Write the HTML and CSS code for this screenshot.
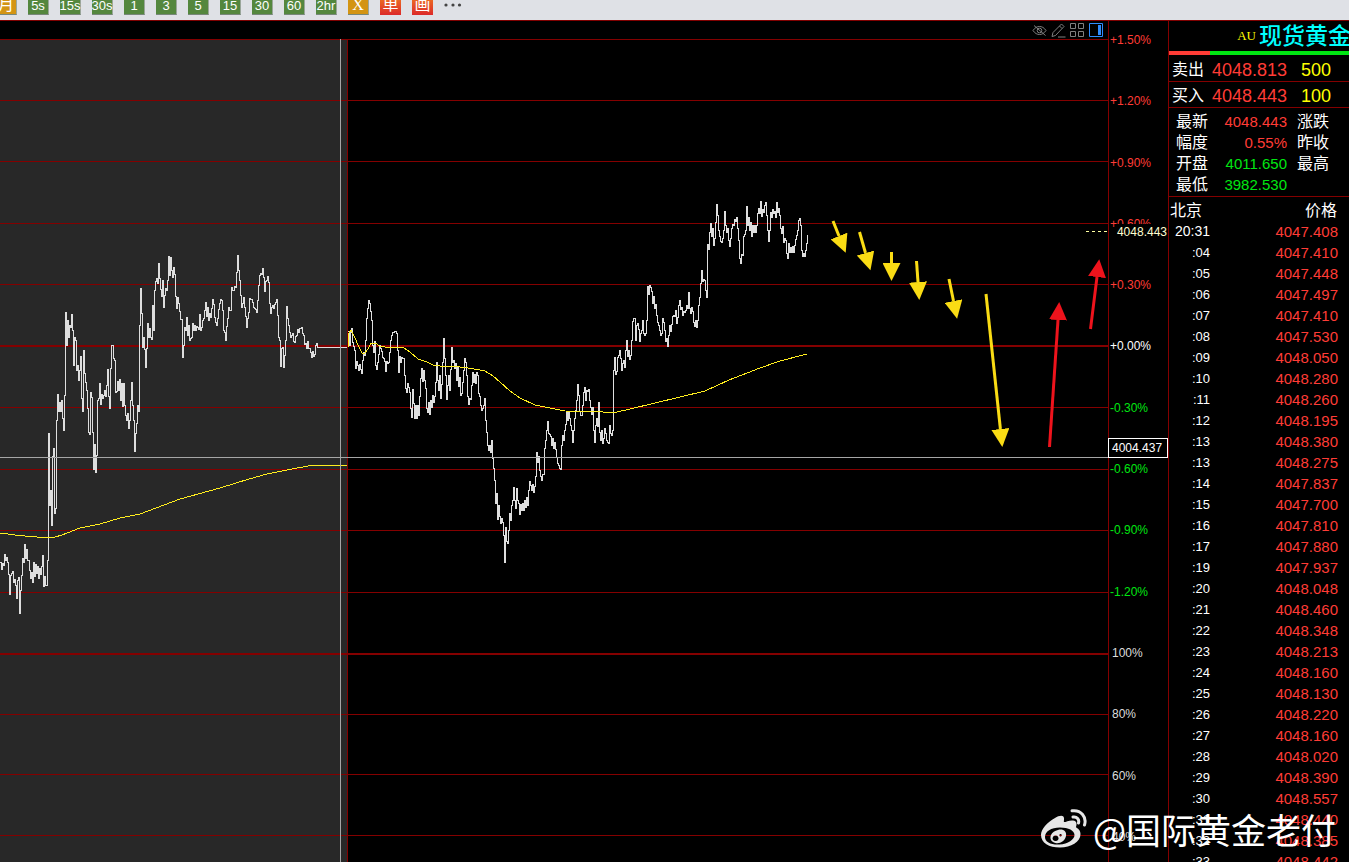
FILE: index.html
```html
<!DOCTYPE html>
<html lang="zh-CN">
<head>
    <meta charset="UTF-8">
    <meta name="viewport" content="width=device-width, initial-scale=1.0">
    <title>现货黄金</title>
    <link rel="stylesheet" href="styles.css">
</head>
<body>

    <nav class="toolbar">
        <button class="tool gold">月</button>
        <button class="tool">5s</button>
        <button class="tool">15s</button>
        <button class="tool">30s</button>
        <button class="tool">1</button>
        <button class="tool">3</button>
        <button class="tool">5</button>
        <button class="tool">15</button>
        <button class="tool">30</button>
        <button class="tool">60</button>
        <button class="tool">2hr</button>
        <button class="tool gold serif">X</button>
        <button class="tool red">单</button>
        <button class="tool red">画</button>
        <button class="more" aria-label="更多">
            <svg width="18" height="4" viewBox="0 0 18 4"><circle cx="2" cy="2" r="1.6"/><circle cx="9" cy="2" r="1.6"/><circle cx="15.500" cy="2" r="1.6"/></svg>
        </button>
    </nav>

    <main class="workspace">
        <section class="chart">
            <div class="chart-tools">
                <button class="icon" aria-label="隐藏">
                    <svg viewBox="0 0 15 15"><path d="M1 7.500C3 4.500 5.200 3.500 7.500 3.500S12 4.500 14 7.500C12 10.500 9.800 11.500 7.500 11.500S3 10.500 1 7.500Z"/><circle cx="7.500" cy="7.500" r="2.300"/><path d="M2 2.500L13.500 12.500"/></svg>
                </button>
                <button class="icon" aria-label="画线">
                    <svg viewBox="0 0 15 15"><path d="M1 13.500L2 9.500L10.500 1L13 3.500L4.500 12.500L1 13.500M8.500 3L11 5.500M7 14H14.500"/></svg>
                </button>
                <button class="icon" aria-label="多图">
                    <svg viewBox="0 0 15 15"><path d="M.5 .5H5.500V5.500H.5ZM8.500 .5H13.500V5.500H8.500ZM.5 8.500H5.500V13.500H.5ZM8.500 8.500H13.500V13.500H8.500Z"/></svg>
                </button>
                <button class="icon active" aria-label="侧栏">
                    <svg viewBox="0 0 15 15"><path d="M.5 .5H13.500V13.500H.5Z"/><rect class="fill" x="9" y="2" width="3" height="10"/></svg>
                </button>
            </div>
            <svg class="plot" viewBox="0 39 1108 823" preserveAspectRatio="none">
                <defs>
                    <marker id="headYellow" markerUnits="userSpaceOnUse" markerWidth="19" markerHeight="18" refX="0" refY="9" orient="auto"><path class="yellow head" d="M0 0L18 9L0 18Z"/></marker>
                    <marker id="headRed" markerUnits="userSpaceOnUse" markerWidth="19" markerHeight="18" refX="0" refY="9" orient="auto"><path class="crimson head" d="M0 0L18 9L0 18Z"/></marker>
                </defs>
                <rect class="previous-day" x="0" y="39" width="348" height="823"/>
                <g id="grid"></g>
                <path class="grid-line" d="M347.500 39V862"/>
                <g id="series"></g>
                <path class="crosshair" d="M340.500 39V862M0 457.500H1108"/>
                <path class="last-price" d="M1086 231.500H1108"/>
                <g class="arrow yellow">
                    <path d="M833 221L839 236"/>
                    <path d="M859.500 232L865.500 253"/>
                    <path d="M891.500 252V263"/>
                    <path d="M916.500 261L918 282"/>
                    <path d="M949 279L953.500 301"/>
                    <path d="M986 294L1000.400 429"/>
                </g>
                <g class="arrow crimson">
                    <path d="M1049.500 447L1058 320"/>
                    <path d="M1090.500 329L1097 277"/>
                </g>
            </svg>
        </section>

        <aside class="axis">
            <span class="up">+1.50%</span>
            <span class="up">+1.20%</span>
            <span class="up">+0.90%</span>
            <span class="up">+0.60%</span>
            <span class="up">+0.30%</span>
            <span>+0.00%</span>
            <span class="down">-0.30%</span>
            <span class="down">-0.60%</span>
            <span class="down">-0.90%</span>
            <span class="down">-1.20%</span>
            <span class="volume">100%</span>
            <span class="volume">80%</span>
            <span class="volume">60%</span>
            <span class="volume">40%</span>
            <div class="price-now">4048.443</div>
            <div class="price-cursor">4004.437</div>
        </aside>

        <aside class="quote">
            <h1><small>AU</small> 现货黄金</h1>
            <div class="ratio"></div>
            <div class="deal">
                <span>卖出</span><b class="up">4048.813</b><em>500</em>
            </div>
            <div class="deal">
                <span>买入</span><b class="up">4048.443</b><em>100</em>
            </div>
            <div class="stats">
                <span>最新</span><b class="up">4048.443</b><i>涨跌</i>
                <span>幅度</span><b class="up">0.55%</b><i>昨收</i>
                <span>开盘</span><b class="down">4011.650</b><i>最高</i>
                <span>最低</span><b class="down">3982.530</b><i></i>
            </div>
            <table class="ticks">
                <thead><tr><th>北京</th><th>价格</th></tr></thead>
                <tbody id="ticks"></tbody>
            </table>
        </aside>
    </main>

    <div class="watermark">
        <svg width="48" height="40" viewBox="0 0 48 40">
            <path class="solid" fill-rule="evenodd" d="M15 9C19 6.500 23.500 5.500 24 9C24.300 11 23.500 12.500 24 13C25 13.500 29 11 33 11.500C37 12 37 15 36 18C35.700 19 40.500 19.500 40.500 25C40.500 33 31 38.500 20 38.500C9 38.500 1 34 1 26C1 20 7 13.500 15 9ZM20 18.500C11 18.500 5 22.500 5 28C5 33 11 36 19.500 35.500C28 35 34.500 30.500 34.500 26C34.500 21.500 28.500 18.500 20 18.500Z"/>
            <path class="solid" fill-rule="evenodd" d="M18 21C23 19.500 27 22.500 26 27C25 32 20 35 15.500 34C11 33 9.500 29.500 11 26C12 23.500 15 21.500 18 21ZM15.500 26.500A3 2.800 0 1 0 15.600 26.500ZM20.500 25A1.300 1.200 0 1 0 20.600 25Z"/>
            <path class="wave" d="M32 1.800C41 .5 47 8 44.500 16M33 8C37 7.300 39.500 10.500 38.500 14"/>
        </svg>
        <span>@国际黄金老付</span>
    </div>

    <script src="script.js"></script>
</body>
</html>
```

FILE: styles.css
```css
* {
    box-sizing: border-box;
}

body {
    margin: 0;
    height: 100vh;
    overflow: hidden;
    position: relative;
    display: flex;
    flex-direction: column;
    background: #000;
    color: #fff;
    font-family: "Liberation Sans", "Noto Sans CJK SC", sans-serif;
}

button {
    padding: 0;
    border: 0;
    background: none;
    font-family: inherit;
    cursor: pointer;
}

.up {
    color: #ff3c36;
}

.down {
    color: #00e612;
}

/* Period toolbar */
.toolbar {
    height: 21px;
    flex: none;
    display: flex;
    align-items: flex-end;
    gap: 11px;
    padding-bottom: 5px;
    overflow: hidden;
    background: #dfe1e6;
    border-bottom: 1px solid #800000;
}

.tool {
    flex: none;
    width: 21px;
    height: 21px;
    padding-top: 4px;
    background: #54873e;
    border-right: 1px solid #9aa69a;
    border-bottom: 1px solid #77877a;
    color: #fff;
    font: 13px/16px "Liberation Sans", "Noto Sans CJK SC", sans-serif;
    display: flex;
    justify-content: center;
    align-items: center;
    white-space: nowrap;
}

.tool:first-child {
    margin-left: -4px;
}

.tool.gold {
    padding-top: 2px;
    background: #d39413;
    font-size: 16px;
}

.tool.serif {
    font-family: "Liberation Serif", serif;
}

.tool.red {
    padding-top: 0;
    background: linear-gradient(#f08020, #dc2a2a);
    border: 0;
    font-size: 16px;
}

.more {
    height: 21px;
    fill: #444;
}

.more svg {
    display: block;
}

/* Chart */
.workspace {
    flex: 1;
    min-height: 0;
    display: flex;
}

.chart {
    flex: 1;
    min-width: 0;
    display: flex;
    flex-direction: column;
}

.chart-tools {
    height: 18px;
    flex: none;
    display: flex;
    justify-content: flex-end;
    align-items: center;
    gap: 4px;
    padding-right: 4px;
}

.icon {
    width: 15px;
    height: 15px;
}

.icon svg {
    display: block;
    fill: none;
    stroke: #808080;
}

.icon.active svg {
    stroke: #2f8cff;
}

.icon .fill {
    fill: #2f8cff;
    stroke: none;
}

.plot {
    flex: 1;
    min-height: 0;
    width: 100%;
    display: block;
}

.previous-day {
    fill: #282828;
}

.grid-line {
    fill: none;
    stroke: #840000;
    shape-rendering: crispEdges;
}

.grid-line.thick {
    stroke-width: 2;
}

.crosshair {
    fill: none;
    stroke: #a6a6a6;
    shape-rendering: crispEdges;
}

.last-price {
    stroke: #ffffa0;
    stroke-dasharray: 3 3;
}

.line {
    fill: none;
    stroke: #dedede;
    shape-rendering: crispEdges;
}

.line.average {
    stroke: #ffee1e;
}

.yellow {
    fill: #fadc14;
}

.crimson {
    fill: #ee131c;
}

.arrow {
    stroke-width: 3;
}

.arrow.yellow {
    stroke: #fadc14;
}

.arrow.crimson {
    stroke: #ee131c;
}

.head {
    stroke: none;
}

.arrow.yellow path {
    marker-end: url(#headYellow);
}

.arrow.crimson path {
    marker-end: url(#headRed);
}

/* Percent axis */
.axis {
    position: relative;
    flex: none;
    width: 60px;
    display: flex;
    flex-direction: column;
    justify-content: space-between;
    padding: 11px 0 17px 1px;
    border-left: 1px solid #840000;
    font-size: 12px;
    line-height: 16px;
}

.axis .volume {
    padding-left: 2px;
    color: #ddd;
}

.price-now,
.price-cursor {
    position: absolute;
    background: #000;
}

.price-now {
    top: 203px;
    right: 0;
    padding: 0 1px;
    color: #ffffd0;
}

.price-cursor {
    top: 417px;
    left: -1px;
    right: 0;
    border: 1px solid #fff;
    padding-left: 3px;
    line-height: 18px;
}

/* Quote panel */
.quote {
    flex: none;
    width: 181px;
    overflow: hidden;
    border-left: 1px solid #840000;
}

.quote h1 {
    margin: 0 -2px 0 0;
    height: 30px;
    display: flex;
    justify-content: flex-end;
    align-items: center;
    gap: 3px;
    color: #00ffff;
    font-size: 23px;
    font-weight: 500;
    line-height: 30px;
    white-space: nowrap;
}

.quote small {
    color: #ff0;
    font: 13px "Liberation Serif", serif;
}

.quote b,
.quote i,
.quote em {
    font-style: normal;
    font-weight: 400;
}

.ratio {
    height: 4px;
    background: linear-gradient(to right, #ff3c36 23%, #00e612 23%);
}

.deal,
.stats {
    display: grid;
    grid-template-columns: 40px 78px 1fr;
    border-bottom: 1px solid #840000;
    font-size: 16px;
    white-space: nowrap;
}

.deal b,
.stats b {
    text-align: right;
}

.deal {
    padding-left: 3px;
    grid-template-columns: 40px 75px 1fr;
    line-height: 30px;
    height: 27px;
}

.deal + .deal {
    height: 26px;
    line-height: 28px;
}

.deal b,
.deal em {
    font-size: 18px;
}

.deal em {
    padding-left: 14px;
    color: #ff0;
}

.stats {
    padding: 3px 0 1px;
    line-height: 21px;
}

.stats span {
    padding-left: 7px;
}

.stats b {
    font-size: 15px;
}

.stats i {
    padding-left: 10px;
}

.ticks {
    width: 100%;
    border-collapse: collapse;
    line-height: 21px;
    white-space: nowrap;
}

.ticks th {
    padding: 3px 12px 0 1px;
    font-size: 16px;
    font-weight: 400;
    text-align: left;
}

.ticks th:first-child {
    padding-right: 0;
}

.ticks th:last-child {
    text-align: right;
}

.ticks td {
    padding: 0 11px 0 0;
    height: 21px;
    font-size: 15px;
    text-align: right;
}

.ticks td:first-child {
    width: 40px;
    padding: 0;
    font-size: 13px;
}

.ticks tr:first-child td:first-child {
    padding-left: 6px;
    font-size: 14px;
}

.watermark {
    position: absolute;
    right: 13px;
    bottom: 11px;
    display: flex;
    align-items: center;
    gap: 5px;
    font: 35px/44px "Noto Sans CJK SC", sans-serif;
    white-space: nowrap;
}

.watermark .solid {
    fill: #e6e6e6;
}

.watermark .wave {
    fill: none;
    stroke: #e6e6e6;
    stroke-width: 3;
    stroke-linecap: round;
}
```

FILE: script.js
```javascript
const SVG_NS = 'http://www.w3.org/2000/svg';

// One value per pixel column
const previousDay = [
    562, 569, 563, 565, 554, 560, 557, 562, 574, 594, 575, 573, 571, 582, 579, 585, 598, 580, 577, 613,
    590, 575, 558, 562, 544, 558, 549, 560, 560, 570, 578, 572, 582, 562, 576, 564, 573, 566, 578, 568,
    574, 566, 555, 586, 576, 585, 585, 560, 433, 505, 490, 525, 456, 448, 513, 508, 420, 394, 411, 402,
    411, 400, 418, 430, 395, 312, 345, 320, 337, 325, 327, 314, 330, 365, 337, 340, 370, 365, 380, 370,
    356, 398, 411, 350, 373, 382, 390, 408, 432, 434, 392, 397, 432, 469, 444, 472, 455, 400, 398, 383,
    404, 394, 398, 395, 390, 396, 385, 369, 396, 408, 368, 345, 345, 358, 360, 392, 391, 381, 390, 379,
    400, 383, 406, 383, 405, 415, 420, 413, 428, 420, 400, 382, 405, 420, 451, 433, 423, 405, 411, 325,
    288, 313, 347, 337, 349, 367, 348, 323, 337, 328, 337, 339, 305, 330, 290, 281, 278, 283, 263, 278,
    289, 296, 280, 307, 295, 288, 290, 280, 256, 275, 257, 270, 277, 267, 274, 296, 308, 297, 303, 311,
    319, 319, 357, 345, 327, 330, 317, 335, 325, 340, 338, 337, 323, 330, 325, 330, 326, 327, 329, 314,
    330, 327, 320, 318, 310, 302, 316, 307, 320, 313, 317, 308, 299, 304, 317, 322, 325, 318, 309, 303,
    299, 300, 310, 330, 332, 340, 326, 318, 307, 310, 310, 287, 290, 290, 286, 287, 272, 255, 270, 280,
    295, 307, 303, 297, 307, 316, 327, 318, 312, 298, 299, 299, 302, 307, 308, 309, 312, 300, 285, 275,
    273, 274, 268, 277, 291, 281, 280, 276, 282, 303, 313, 307, 305, 308, 304, 302, 299, 315, 337, 340,
    366, 348, 347, 367, 355, 340, 306, 318, 325, 332, 337, 335, 333, 341, 342, 336, 335, 329, 332, 328,
    328, 327, 333, 335, 344, 343, 348, 341, 348, 348, 352, 357, 351, 356, 354, 345, 343, 347
];

const currentDay = [
    331, 345, 332, 328, 342, 346, 350, 368, 361, 365, 370, 364, 369, 373, 360, 352, 355, 340, 318, 308,
    300, 303, 311, 320, 345, 352, 341, 365, 369, 362, 354, 345, 348, 351, 357, 358, 361, 371, 361, 363,
    362, 352, 340, 335, 332, 332, 331, 331, 333, 350, 372, 356, 362, 357, 358, 358, 375, 388, 392, 383,
    387, 392, 408, 417, 389, 403, 418, 405, 418, 405, 415, 396, 378, 368, 381, 370, 380, 388, 408, 412,
    402, 414, 400, 407, 395, 402, 396, 382, 362, 380, 390, 375, 398, 384, 362, 338, 358, 375, 399, 385,
    375, 390, 369, 347, 362, 360, 368, 363, 380, 366, 386, 377, 395, 393, 382, 370, 358, 362, 375, 396,
    404, 398, 399, 385, 372, 382, 374, 383, 372, 375, 393, 396, 405, 410, 408, 405, 398, 420, 432, 445,
    450, 445, 452, 440, 458, 468, 480, 503, 493, 519, 505, 516, 523, 518, 522, 535, 562, 527, 541, 543,
    530, 513, 520, 505, 500, 487, 500, 508, 488, 500, 503, 514, 504, 510, 503, 510, 500, 507, 497, 505,
    490, 481, 485, 490, 484, 492, 486, 476, 452, 462, 456, 470, 476, 480, 474, 474, 448, 440, 430, 421,
    433, 434, 436, 445, 438, 448, 442, 449, 457, 463, 465, 468, 469, 445, 435, 440, 430, 424, 411, 420,
    412, 418, 425, 430, 442, 430, 418, 410, 400, 384, 395, 411, 415, 415, 405, 392, 387, 400, 390, 391,
    389, 400, 407, 414, 407, 430, 442, 425, 418, 426, 402, 432, 440, 430, 443, 438, 428, 433, 440, 442,
    443, 425, 433, 435, 430, 370, 357, 374, 371, 357, 355, 350, 358, 370, 363, 360, 367, 350, 340, 356,
    350, 359, 355, 340, 321, 318, 318, 340, 325, 323, 329, 341, 333, 330, 320, 333, 335, 333, 320, 286,
    294, 285, 287, 291, 303, 296, 308, 304, 315, 322, 325, 330, 335, 333, 318, 322, 330, 341, 338, 346,
    335, 325, 331, 324, 316, 315, 316, 310, 323, 317, 305, 300, 309, 307, 315, 311, 312, 310, 305, 308,
    292, 308, 313, 307, 311, 322, 326, 320, 327, 320, 305, 297, 283, 270, 281, 279, 280, 290, 297, 244,
    249, 232, 223, 236, 228, 245, 238, 222, 204, 215, 230, 236, 241, 242, 238, 230, 211, 225, 232, 228,
    240, 246, 238, 228, 224, 225, 219, 221, 217, 228, 240, 258, 263, 254, 255, 236, 234, 230, 206, 225,
    217, 230, 222, 236, 225, 232, 225, 232, 225, 213, 208, 213, 201, 216, 209, 212, 205, 202, 215, 230,
    241, 230, 212, 217, 209, 213, 211, 217, 202, 212, 208, 215, 228, 233, 226, 242, 238, 240, 253, 258,
    243, 252, 247, 252, 246, 252, 245, 239, 235, 230, 220, 218, 225, 250, 256, 253, 256, 250, 243, 235
];

const previousAverage = '0,533 15,535 25,536 48,538 55,537 62,535 80,528 100,524 120,518 140,514 180,499 220,488 249,479 267,474 287,470 313,465 347,465';
const currentAverage = '348,347 349,333 351,330 355,338 358,345 362,353 365,353 368,349 371,343 375,343 380,346 390,348 398,347 404,348 410,352 418,359 427,362 433,365 440,366 460,367 468,368 480,370 485,371 493,376 500,382 510,391 520,398 535,405 550,408 565,411 603,412 617,412 630,409 655,403 705,391 729,380 760,368 780,361 807,354';

const gridRows = [39, 100, 161, 223, 284, 346, 407, 469, 530, 592, 654, 714, 774, 835];
const thickRows = [346, 654];

const ticks = [
    ['20:31', '4047.408'], [':04', '4047.410'], [':05', '4047.448'], [':06', '4047.497'],
    [':07', '4047.410'], [':08', '4047.530'], [':09', '4048.050'], [':10', '4048.280'],
    [':11', '4048.260'], [':12', '4048.195'], [':13', '4048.380'], [':13', '4048.275'],
    [':14', '4047.837'], [':15', '4047.700'], [':16', '4047.810'], [':17', '4047.880'],
    [':19', '4047.937'], [':20', '4048.048'], [':21', '4048.460'], [':22', '4048.348'],
    [':23', '4048.213'], [':24', '4048.160'], [':25', '4048.130'], [':26', '4048.220'],
    [':27', '4048.160'], [':28', '4048.020'], [':29', '4048.390'], [':30', '4048.557'],
    [':31', '4048.440'], [':32', '4048.385'], [':33', '4048.442']
];

function addShape(parent, tag, attrs) {
    const el = document.createElementNS(SVG_NS, tag);
    for (const key in attrs) {
        el.setAttribute(key, attrs[key]);
    }
    parent.appendChild(el);
}

// Each column is a vertical bar from the last value to the new one
function toBars(values, startX) {
    return values.map((y, i) => {
        const last = i > 0 ? values[i - 1] : y;
        return `M${startX + i + 0.5} ${Math.min(last, y)}V${Math.max(last, y) + 1}`;
    }).join('');
}

const grid = document.getElementById('grid');
gridRows.forEach((y) => {
    const thick = thickRows.includes(y);
    addShape(grid, 'path', {
        class: thick ? 'grid-line thick' : 'grid-line',
        d: `M0 ${thick ? y : y + 0.5}H1108`
    });
});

const series = document.getElementById('series');
addShape(series, 'path', { class: 'line', d: toBars(previousDay, 0) + 'M317 347.5H347' });
addShape(series, 'path', { class: 'line', d: toBars(currentDay, 348) });
addShape(series, 'polyline', { class: 'line average', points: previousAverage });
addShape(series, 'polyline', { class: 'line average', points: currentAverage });

document.getElementById('ticks').innerHTML = ticks
    .map(([time, price]) => `<tr><td>${time}</td><td class="up">${price}</td></tr>`)
    .join('');
```
